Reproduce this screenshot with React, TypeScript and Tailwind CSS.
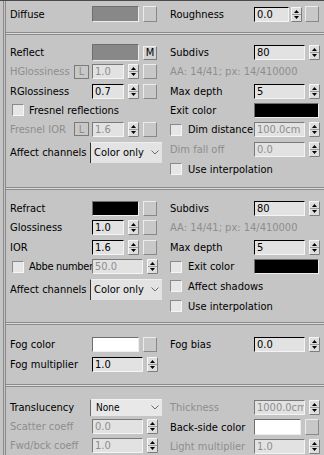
import type { ReactNode } from "react";

const DIM = "text-[#8e8e8e]";

function Spin({ cls = "" }: { cls?: string }) {
  return (
    <svg width="11" height="15" viewBox="0 0 11 15" className={`block shrink-0 ${cls}`}>
      <rect x="0" y="0" width="11" height="15" fill="#dedede" />
      <path d="M0.5 14.5V0.5H10.5" stroke="#f6f6f6" fill="none" />
      <path d="M10.5 0.5V14.5H0.5" stroke="#7c7c7c" fill="none" />
      <path d="M1 7.5H10" stroke="#9a9a9a" />
      <path d="M3 6L5.5 3L8 6Z" fill="#000" />
      <path d="M3 9L5.5 12L8 9Z" fill="#000" />
    </svg>
  );
}

function Num({
  v,
  w,
  off = false,
  h = "h-[15px]",
}: {
  v: string;
  w: string;
  off?: boolean;
  h?: string;
}) {
  const edge = off
    ? "border-t-[#7a7a7a] border-l-[#7a7a7a] text-[#8e8e8e]"
    : "border-t-black border-l-black text-black";
  return (
    <div
      className={`${w} ${h} shrink-0 flex items-center pl-[2px] overflow-hidden whitespace-nowrap bg-[#e2e2e2] border border-r-[#f4f4f4] border-b-[#f4f4f4] ${edge}`}
    >
      {v}
    </div>
  );
}

function MapBtn({ h = "h-[15px]", cls = "" }: { h?: string; cls?: string }) {
  return (
    <div
      className={`w-[14px] ${h} shrink-0 bg-[#c8c8c8] border border-t-[#ececec] border-l-[#ececec] border-r-[#888888] border-b-[#888888] ${cls}`}
    />
  );
}

function Swatch({ bg, w, h }: { bg: string; w: string; h: string }) {
  return (
    <div
      className={`${w} ${h} shrink-0 ${bg} border border-t-[#6e6e6e] border-l-[#6e6e6e] border-r-[#eeeeee] border-b-[#eeeeee]`}
    />
  );
}

function Check({ cls = "" }: { cls?: string }) {
  return (
    <div
      className={`w-[12px] h-[12px] shrink-0 bg-[#e6e6e6] border border-t-[#8a8a8a] border-l-[#8a8a8a] border-r-[#f6f6f6] border-b-[#f6f6f6] ${cls}`}
    />
  );
}

function Chevron() {
  return (
    <svg width="8" height="5" viewBox="0 0 8 5" className="block ml-auto mr-[3px] shrink-0">
      <polyline points="0.5,0.5 4,4 7.5,0.5" stroke="#6a6a6a" fill="none" />
    </svg>
  );
}

function Row({ h, children }: { h: string; children: ReactNode }) {
  return <div className={`flex items-center shrink-0 ${h}`}>{children}</div>;
}

function LL({ children, dim = false }: { children: ReactNode; dim?: boolean }) {
  return (
    <div className={`w-[82px] shrink-0 flex items-center whitespace-nowrap ${dim ? DIM : ""}`}>
      {children}
    </div>
  );
}

function RL({ children, dim = false }: { children: ReactNode; dim?: boolean }) {
  return (
    <div className={`w-[84px] shrink-0 flex items-center whitespace-nowrap ${dim ? DIM : ""}`}>
      {children}
    </div>
  );
}

function LBtn() {
  return (
    <div className="ml-auto mr-[3px] w-[15px] h-[14px] flex items-center justify-center border border-[#7a7a7a] bg-[#c8c8c8] text-[#8e8e8e]">
      L
    </div>
  );
}

function ColorOnly() {
  return (
    <div className="-ml-px w-[72px] h-[21px] shrink-0 flex items-center pl-[3px] bg-[#e3e3e3] border-l border-t border-l-[#303030] border-t-[#efefef]">
      <span>Color only</span>
      <Chevron />
    </div>
  );
}

function Sep() {
  return <div className="h-[3px] shrink-0 border-t border-b border-[#8a8a8a] bg-[#dcdcdc]" />;
}

export default function App() {
  return (
    <div className="w-[324px] h-[455px] overflow-hidden flex bg-[#c5c5c5] border-t border-[#4a4a4a] font-['DejaVu_Sans_Condensed','Liberation_Sans',Arial,sans-serif] text-[11px] leading-none text-black">
      <div className="w-[3px] shrink-0" />
      <div className="flex-1 min-w-0 flex flex-col border-l-[3px] border-double border-[#8a8a8a]">
        {/* diffuse */}
        <div className="flex h-[31px] pt-[1px] shrink-0">
          <div className="w-[156px] shrink-0 pl-[4px] flex flex-col">
            <Row h="h-[24px]">
              <LL>Diffuse</LL>
              <Swatch bg="bg-[#888888]" w="w-[47px]" h="h-[16px]" />
              <MapBtn h="h-[16px]" cls="ml-[4px]" />
            </Row>
          </div>
          <div className="flex-1 pl-[8px] flex flex-col">
            <Row h="h-[24px]">
              <RL>Roughness</RL>
              <Num v="0.0" w="w-[35px]" />
              <Spin cls="ml-[2px]" />
              <MapBtn h="h-[16px]" cls="ml-[3px]" />
            </Row>
          </div>
        </div>
        <Sep />

        {/* reflect */}
        <div className="flex h-[152px] pt-[8px] shrink-0">
          <div className="w-[156px] shrink-0 pl-[4px] flex flex-col">
            <Row h="h-[19px]">
              <LL>Reflect</LL>
              <Swatch bg="bg-[#888888]" w="w-[47px]" h="h-[17px]" />
              <div className="ml-[4px] w-[14px] h-[14px] flex items-center justify-center bg-[#d2d2d2] border border-t-[#f0f0f0] border-l-[#f0f0f0] border-r-[#7a7a7a] border-b-[#7a7a7a]">
                M
              </div>
            </Row>
            <Row h="h-[19px]">
              <LL>
                <span className={DIM}>HGlossiness</span>
                <LBtn />
              </LL>
              <Num v="1.0" w="w-[32px]" off />
              <Spin cls="ml-[4px]" />
              <MapBtn cls="ml-[4px]" />
            </Row>
            <Row h="h-[20px]">
              <LL>RGlossiness</LL>
              <Num v="0.7" w="w-[32px]" />
              <Spin cls="ml-[4px]" />
              <MapBtn cls="ml-[4px]" />
            </Row>
            <Row h="h-[18px]">
              <Check cls="ml-[2px]" />
              <span className="ml-[5px] whitespace-nowrap">Fresnel reflections</span>
            </Row>
            <Row h="h-[20px]">
              <LL>
                <span className={DIM}>Fresnel IOR</span>
                <LBtn />
              </LL>
              <Num v="1.6" w="w-[32px]" off />
              <Spin cls="ml-[4px]" />
              <MapBtn cls="ml-[4px]" />
            </Row>
            <Row h="h-[26px]">
              <div className="w-[81px] shrink-0 whitespace-nowrap">Affect channels</div>
              <ColorOnly />
            </Row>
          </div>
          <div className="flex-1 pl-[8px] flex flex-col">
            <Row h="h-[19px]">
              <RL>Subdivs</RL>
              <Num v="80" w="w-[51px]" />
              <Spin cls="ml-[4px]" />
            </Row>
            <Row h="h-[19px]">
              <span className={`${DIM} whitespace-nowrap`}>AA: 14/41; px: 14/410000</span>
            </Row>
            <Row h="h-[20px]">
              <RL>Max depth</RL>
              <Num v="5" w="w-[51px]" />
              <Spin cls="ml-[4px]" />
            </Row>
            <Row h="h-[19px]">
              <RL>Exit color</RL>
              <Swatch bg="bg-black" w="w-[65px]" h="h-[15px]" />
            </Row>
            <Row h="h-[19px]">
              <RL>
                <Check />
                <span className="ml-[6px]">Dim distance</span>
              </RL>
              <Num v="100.0cm" w="w-[51px]" off />
              <Spin cls="ml-[4px]" />
            </Row>
            <Row h="h-[20px]">
              <RL dim>Dim fall off</RL>
              <Num v="0.0" w="w-[51px]" off />
              <Spin cls="ml-[4px]" />
            </Row>
            <Row h="h-[20px]">
              <Check />
              <span className="ml-[6px] whitespace-nowrap">Use interpolation</span>
            </Row>
          </div>
        </div>
        <Sep />

        {/* refract */}
        <div className="flex h-[132px] pt-[9px] shrink-0">
          <div className="w-[156px] shrink-0 pl-[4px] flex flex-col">
            <Row h="h-[19px]">
              <LL>Refract</LL>
              <Swatch bg="bg-black" w="w-[47px]" h="h-[15px]" />
              <MapBtn cls="ml-[4px]" />
            </Row>
            <Row h="h-[19px]">
              <LL>Glossiness</LL>
              <Num v="1.0" w="w-[32px]" />
              <Spin cls="ml-[4px]" />
              <MapBtn cls="ml-[4px]" />
            </Row>
            <Row h="h-[20px]">
              <LL>IOR</LL>
              <Num v="1.6" w="w-[32px]" />
              <Spin cls="ml-[4px]" />
              <MapBtn cls="ml-[4px]" />
            </Row>
            <Row h="h-[19px]">
              <LL>
                <Check cls="ml-[2px]" />
                <span className="ml-[5px] tracking-[-0.3px]">Abbe number</span>
              </LL>
              <Num v="50.0" w="w-[51px]" off />
              <Spin cls="ml-[4px]" />
            </Row>
            <Row h="h-[26px]">
              <div className="w-[81px] shrink-0 whitespace-nowrap">Affect channels</div>
              <ColorOnly />
            </Row>
          </div>
          <div className="flex-1 pl-[8px] flex flex-col">
            <Row h="h-[19px]">
              <RL>Subdivs</RL>
              <Num v="80" w="w-[51px]" />
              <Spin cls="ml-[4px]" />
            </Row>
            <Row h="h-[19px]">
              <span className={`${DIM} whitespace-nowrap`}>AA: 14/41; px: 14/410000</span>
            </Row>
            <Row h="h-[20px]">
              <RL>Max depth</RL>
              <Num v="5" w="w-[51px]" />
              <Spin cls="ml-[4px]" />
            </Row>
            <Row h="h-[19px]">
              <RL>
                <Check />
                <span className="ml-[6px]">Exit color</span>
              </RL>
              <Swatch bg="bg-black" w="w-[65px]" h="h-[15px]" />
            </Row>
            <Row h="h-[20px]">
              <Check />
              <span className="ml-[6px] whitespace-nowrap">Affect shadows</span>
            </Row>
            <Row h="h-[20px]">
              <Check />
              <span className="ml-[6px] whitespace-nowrap">Use interpolation</span>
            </Row>
          </div>
        </div>
        <Sep />

        {/* fog */}
        <div className="flex h-[59px] pt-[10px] shrink-0">
          <div className="w-[156px] shrink-0 pl-[4px] flex flex-col">
            <Row h="h-[19px]">
              <LL>Fog color</LL>
              <Swatch bg="bg-white" w="w-[47px]" h="h-[15px]" />
              <MapBtn cls="ml-[4px]" />
            </Row>
            <Row h="h-[20px]">
              <LL>Fog multiplier</LL>
              <Num v="1.0" w="w-[51px]" />
              <Spin cls="ml-[4px]" />
            </Row>
          </div>
          <div className="flex-1 pl-[8px] flex flex-col">
            <Row h="h-[19px]">
              <RL>Fog bias</RL>
              <Num v="0.0" w="w-[51px]" />
              <Spin cls="ml-[4px]" />
            </Row>
          </div>
        </div>
        <Sep />

        {/* translucency */}
        <div className="flex pt-[10px] shrink-0">
          <div className="w-[156px] shrink-0 pl-[4px] flex flex-col">
            <Row h="h-[20px]">
              <div className="w-[81px] shrink-0 whitespace-nowrap">Translucency</div>
              <div className="-ml-px w-[72px] h-[17px] shrink-0 flex items-center pl-[5px] bg-[#e8e8e8] border-l border-t border-l-[#6a6a6a] border-t-[#f2f2f2] text-[10px]">
                <span>None</span>
                <Chevron />
              </div>
            </Row>
            <Row h="h-[18px]">
              <LL dim>Scatter coeff</LL>
              <Num v="0.0" w="w-[51px]" off />
              <Spin cls="ml-[4px]" />
            </Row>
            <Row h="h-[20px]">
              <LL dim>Fwd/bck coeff</LL>
              <Num v="1.0" w="w-[51px]" off />
              <Spin cls="ml-[4px]" />
            </Row>
          </div>
          <div className="flex-1 pl-[8px] flex flex-col">
            <Row h="h-[20px]">
              <RL dim>Thickness</RL>
              <Num v="1000.0cm" w="w-[51px]" off />
              <Spin cls="ml-[4px]" />
            </Row>
            <Row h="h-[20px]">
              <RL>Back-side color</RL>
              <Swatch bg="bg-white" w="w-[47px]" h="h-[16px]" />
              <MapBtn h="h-[16px]" cls="ml-[4px]" />
            </Row>
            <Row h="h-[19px]">
              <RL dim>Light multiplier</RL>
              <Num v="1.0" w="w-[51px]" off />
              <Spin cls="ml-[4px]" />
            </Row>
          </div>
        </div>
      </div>
    </div>
  );
}
